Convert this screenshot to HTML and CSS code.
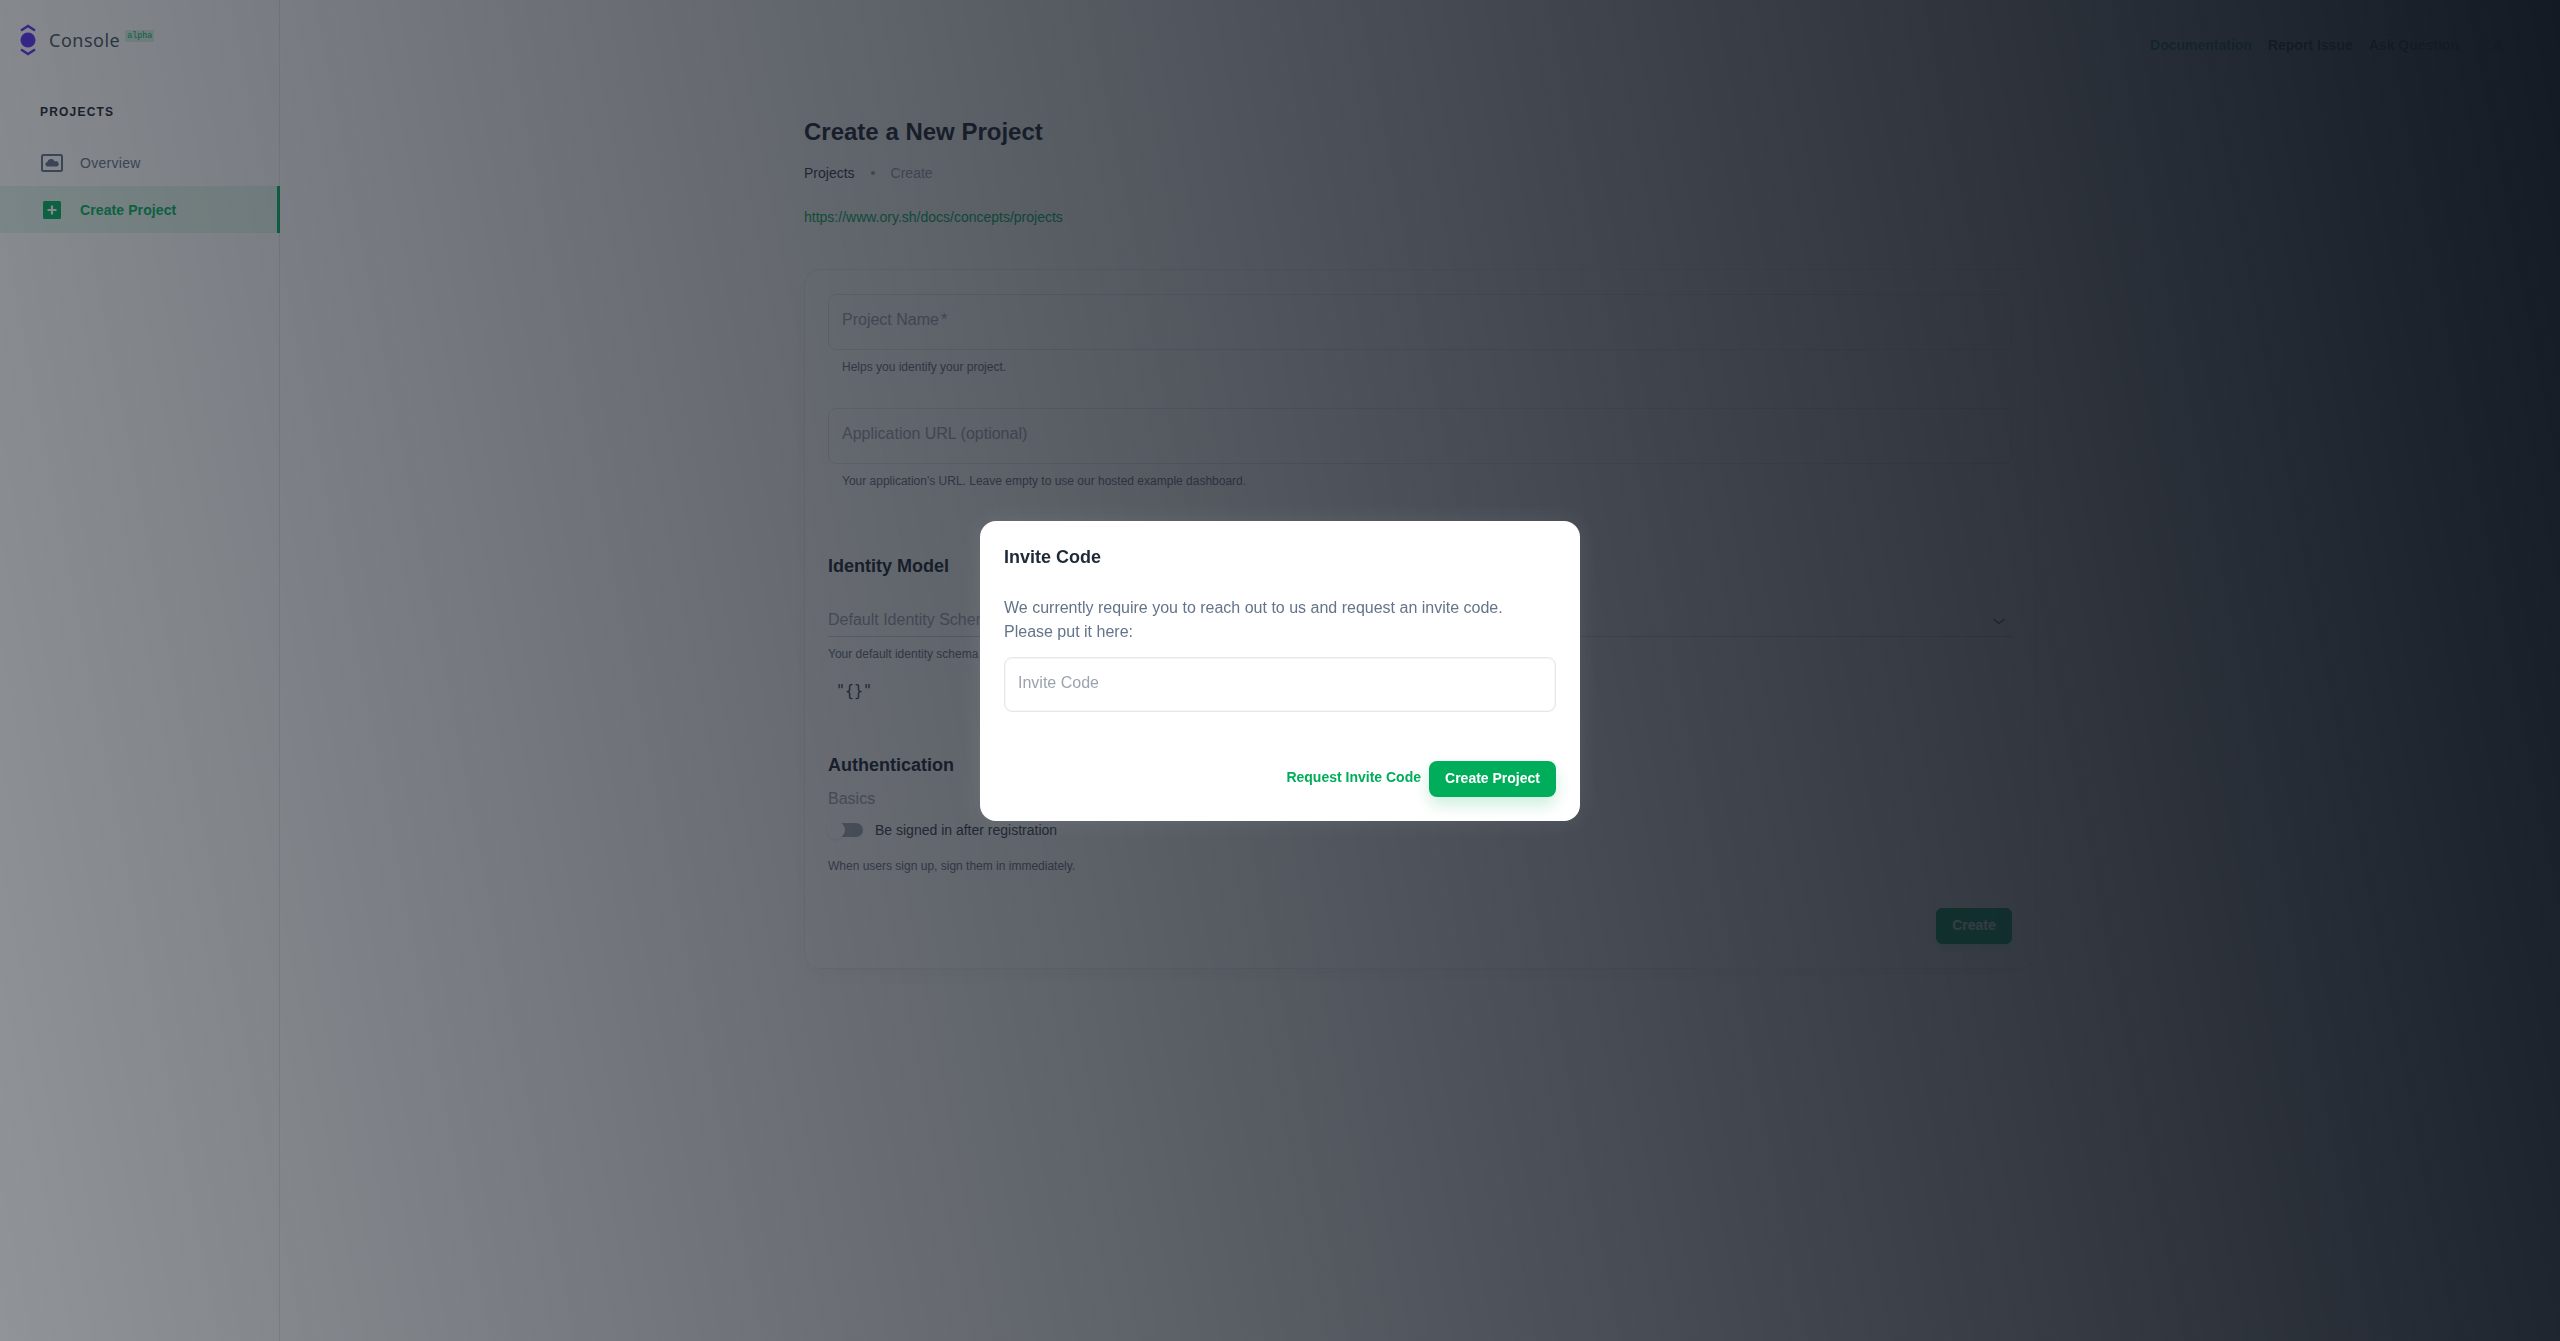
FILE: index.html
```html
<!DOCTYPE html>
<html lang="en">
<head>
<meta charset="utf-8">
<title>Console</title>
<link rel="stylesheet" href="styles.css">
</head>
<body>
<div class="app">
  <aside class="sidebar">
    <div class="brand">
      <svg class="logo" width="16" height="32" viewBox="0 0 16 32"><path d="M1 6.500 8 2l7 4.500" fill="none" stroke="#5b34f5" stroke-width="2.400"/><circle cx="8" cy="16" r="7.500" fill="#5b34f5"/><path d="M1 25.500 8 30l7-4.500" fill="none" stroke="#5b34f5" stroke-width="2.400"/></svg>
      <span class="brand-name">Console</span>
      <span class="brand-tag">alpha</span>
    </div>
    <div class="nav-title">PROJECTS</div>
    <a class="nav-item">
      <svg class="nav-icon" width="22" height="18" viewBox="0 0 22 18"><rect x="1" y="1" width="20" height="16" rx="1.500" fill="none" stroke="#64748b" stroke-width="2"/><path d="M6 12.500a2.300 2.300 0 0 1 .4-4.500 3.800 3.800 0 0 1 7.300-.6A2.600 2.600 0 0 1 16 12.500z" fill="#64748b"/></svg>
      <span>Overview</span>
    </a>
    <a class="nav-item active">
      <svg class="nav-icon" width="22" height="18" viewBox="0 0 22 18"><rect x="2" y="0" width="18" height="18" rx="1.500" fill="#05b062"/><path d="M11 4.500v9M6.500 9h9" stroke="#fff" stroke-width="2.200"/></svg>
      <span>Create Project</span>
    </a>
  </aside>
  <main class="main">
    <nav class="topnav">
      <a class="doc-link">Documentation</a>
      <a>Report Issue</a>
      <a>Ask Question</a>
      <span class="avatar">A</span>
    </nav>
    <div class="content">
      <h1>Create a New Project</h1>
      <div class="crumbs"><span class="crumb-on">Projects</span><i class="dot"></i><span class="crumb-off">Create</span></div>
      <a class="docs-url">https://www.ory.sh/docs/concepts/projects</a>
      <section class="card">
        <div class="field"><div class="input">Project Name<span class="req">*</span></div><p class="help">Helps you identify your project.</p></div>
        <div class="field"><div class="input">Application URL (optional)</div><p class="help">Your application's URL. Leave empty to use our hosted example dashboard.</p></div>
        <h2 class="h-identity">Identity Model</h2>
        <div class="select"><span>Default Identity Schema</span><svg class="chevron" width="12" height="7" viewBox="0 0 12 7"><path d="M.5 1 6 5.500 11.500 1" fill="none" stroke="#4b5563" stroke-width="1.300"/></svg></div>
        <p class="help flush">Your default identity schema</p>
        <pre class="code">"{}"</pre>
        <h2 class="h-auth">Authentication</h2>
        <div class="basics">Basics</div>
        <div class="toggle-row"><span class="toggle"><i></i></span><span>Be signed in after registration</span></div>
        <p class="help flush when">When users sign up, sign them in immediately.</p>
        <div class="card-foot"><button class="btn-create">Create</button></div>
      </section>
    </div>
  </main>
</div>
<div class="overlay"></div>
<div class="modal-wrap">
  <div class="modal">
    <h3>Invite Code</h3>
    <p>We currently require you to reach out to us and request an invite code.<br>Please put it here:</p>
    <div class="modal-input">Invite Code</div>
    <div class="modal-foot">
      <a class="link-btn">Request Invite Code</a>
      <button class="btn-primary">Create Project</button>
    </div>
  </div>
</div>
</body>
</html>
```
FILE: styles.css
```css
* { box-sizing: border-box; }
html, body { margin: 0; height: 100%; }
body { background: #fff; font-family: "Liberation Sans", Arial, sans-serif; color: #1f2937; overflow: hidden; }
.app { display: flex; height: 1341px; }
.sidebar { width: 280px; flex: none; border-right: 1px solid #e5e7eb; }
.brand { display: flex; align-items: flex-start; padding: 24px 0 0 20px; height: 94px; }
.logo { flex: none; }
.brand-name { font-family: "Noto Sans", sans-serif; font-size: 18px; letter-spacing: .5px; color: #4b5563; margin: 4px 0 0 13px; line-height: 25px; }
.brand-tag { font-family: "Liberation Mono", monospace; font-size: 8.400px; color: #05b062; background: #d9f2e5; padding: 0 2px; margin: 6px 0 0 5px; line-height: 12px; height: 12px; }
.nav-title { font-size: 12px; font-weight: 700; letter-spacing: 1.200px; color: #1f2937; padding-left: 40px; line-height: 32px; margin: 2px 0 11px; }
.nav-item { display: flex; align-items: center; gap: 17px; height: 47px; padding-left: 41px; font-size: 14px; letter-spacing: .3px; color: #64748b; }
.nav-item.active { color: #05b062; font-weight: 700; letter-spacing: .1px; background: #e3f5ec; border-right: 3px solid #05b062; margin-right: -1px; }
.nav-icon { flex: none; }
.main { flex: 1; min-width: 0; }
.topnav { display: flex; justify-content: flex-end; align-items: center; gap: 16px; height: 90px; padding-right: 56px; font-size: 14px; font-weight: 700; color: #1f2937; }
.doc-link { color: #05b062; }
.avatar { font-size: 18px; font-weight: 400; margin-left: 17px; }
.content { width: 1232px; margin-left: 524px; margin-top: 26px; }
h1 { margin: 0; font-size: 24px; line-height: 32px; font-weight: 700; color: #1f2937; }
.crumbs { display: flex; align-items: center; font-size: 14px; margin-top: 15px; line-height: 20px; }
.crumb-on { color: #374151; }
.crumb-off { color: #9ca3af; }
.dot { width: 4px; height: 4px; border-radius: 50%; background: #9ca3af; margin: 0 16px; }
.docs-url { display: block; font-size: 14px; line-height: 20px; margin-top: 24px; color: #05b062; }
.card { margin-top: 42px; padding: 24px 23px 24px; height: 700px; border: 1px solid #eceef1; border-radius: 16px; box-shadow: 0 8px 16px rgba(0,0,0,.04); }
.input { height: 56px; border: 1px solid #e5e7eb; border-radius: 8px; padding: 13px 13px; font-size: 16px; line-height: 24px; color: #9ca3af; }
.req { margin-left: 2px; }
.field { height: 114px; }
.help { margin: 8px 0 0 14px; font-size: 12px; line-height: 18px; color: #6b7280; }
.help.flush { margin-left: 0; }
h2 { margin: 0; font-size: 18px; line-height: 28px; font-weight: 700; color: #1f2937; }
.h-identity { margin-top: 30px; }
.select { display: flex; justify-content: space-between; align-items: center; height: 34px; margin-top: 23px; border-bottom: 1px solid #d1d5db; font-size: 16px; color: #9ca3af; padding-right: 7px; }
.chevron { margin-top: 4px; }
.code { margin: 18px 0 0 8px; font-family: "DejaVu Sans Mono", monospace; font-size: 15px; line-height: 20px; color: #374151; }
.h-auth { margin-top: 50px; }
.basics { font-size: 16px; line-height: 24px; color: #9ca3af; margin-top: 8px; }
.toggle-row { display: flex; align-items: center; gap: 12px; font-size: 14px; height: 24px; margin-top: 7px; color: #374151; }
.toggle { position: relative; display: block; width: 36px; height: 14px; margin-left: -1px; }
.toggle::before { content: ""; position: absolute; left: 12px; top: 0; width: 24px; height: 14px; border-radius: 0 7px 7px 0; background: #a3aab5; }
.toggle i { position: absolute; left: 0; top: -2px; width: 18px; height: 18px; border-radius: 50%; background: #fff; box-shadow: 0 1px 3px rgba(0,0,0,.1); }
.when { margin-top: 15px; }
.card-foot { display: flex; justify-content: flex-end; margin-top: 33px; }
.btn-create { width: 76px; height: 36px; border: 0; border-radius: 6px; background: #05b062; color: #fff; font: 700 14px "Liberation Sans", Arial, sans-serif; padding: 0 0 3px; box-shadow: 0 6px 10px rgba(5,176,98,.15); }
.overlay { position: fixed; inset: 0; background: linear-gradient(79deg, rgba(20,26,36,.47), rgba(20,26,36,1)); }
.modal-wrap { position: fixed; inset: 0; display: flex; justify-content: center; align-items: flex-start; padding-top: 521px; }
.modal { width: 600px; height: 300px; padding: 24px; background: #fff; border-radius: 16px; box-shadow: 0 0 24px rgba(255,255,255,.08); }
.modal h3 { margin: 0; font-size: 18px; line-height: 24px; font-weight: 700; color: #1f2937; }
.modal p { margin: 27px 0 0; font-size: 16px; line-height: 24px; color: #64748b; }
.modal-input { margin-top: 13px; height: 55px; border: 1px solid #e5e7eb; box-shadow: inset 0 0 0 1px #f5f6f7; border-radius: 8px; padding: 13px 13px; font-size: 16px; line-height: 24px; color: #9ca3af; }
.modal-foot { display: flex; justify-content: flex-end; align-items: flex-start; gap: 8px; margin-top: 49px; }
.link-btn { font-size: 14px; line-height: 32px; font-weight: 700; color: #00ad5a; }
.btn-primary { width: 127px; height: 36px; border: 0; border-radius: 8px; background: #00ad5a; color: #fff; font: 700 14px "Liberation Sans", Arial, sans-serif; padding: 0 0 3px; box-shadow: 0 8px 16px rgba(0,173,90,.2); }
```
